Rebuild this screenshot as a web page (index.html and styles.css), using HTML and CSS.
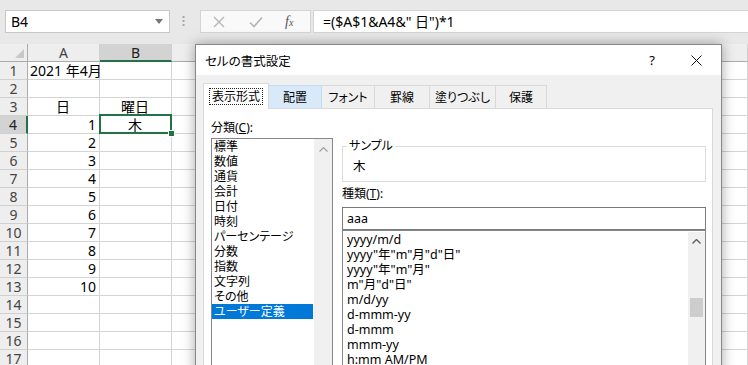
FILE: index.html
```html
<!DOCTYPE html>
<html lang="ja">
<head>
  <meta charset="UTF-8" />
  <title>セルの書式設定</title>
  <link rel="stylesheet" href="styles.css">
</head>
<body>
  <div class="app">
    <!-- 数式バー -->
    <div class="formula-bar">
      <div class="name-box">
        <span>B4</span>
        <svg class="caret" width="8" height="5" viewBox="0 0 8 5"><path d="M0 0h8L4 5z" fill="#777"/></svg>
      </div>
      <svg class="grip" width="3" height="12" viewBox="0 0 3 12">
        <rect x="0.5" y="1" width="2" height="2" fill="#a8a8a8"/>
        <rect x="0.5" y="5" width="2" height="2" fill="#a8a8a8"/>
        <rect x="0.5" y="9" width="2" height="2" fill="#a8a8a8"/>
      </svg>
      <div class="fx-buttons">
        <svg width="12" height="12" viewBox="0 0 12 12"><path d="M1 1l10 10M11 1L1 11" stroke="#b4b4b4" stroke-width="1.3" fill="none"/></svg>
        <svg width="14" height="12" viewBox="0 0 14 12"><path d="M1 6.5l4 4L13 1.5" stroke="#b4b4b4" stroke-width="1.6" fill="none"/></svg>
        <span class="fx">f<small>x</small></span>
      </div>
      <div class="formula-input">=($A$1&amp;A4&amp;" 日")*1</div>
    </div>

    <!-- シート -->
    <div class="sheet" id="sheet"></div>

    <!-- ダイアログ -->
    <div class="dialog">
      <div class="dialog-title">
        <span>セルの書式設定</span>
        <span class="title-help">?</span>
        <svg class="title-close" width="11" height="11" viewBox="0 0 11 11"><path d="M0.5 0.5l10 10M10.5 0.5l-10 10" stroke="#111" stroke-width="1" fill="none"/></svg>
      </div>

      <div class="dialog-body">
        <div class="tabs">
          <div class="tab active"><span class="focus">表示形式</span></div>
          <div class="tab hover">配置</div>
          <div class="tab">フォント</div>
          <div class="tab">罫線</div>
          <div class="tab">塗りつぶし</div>
          <div class="tab">保護</div>
        </div>

        <div class="panel">
          <div class="category">
            <div class="label">分類(<u>C</u>):</div>
            <div class="listbox">
              <ul class="items">
                <li>標準</li>
                <li>数値</li>
                <li>通貨</li>
                <li>会計</li>
                <li>日付</li>
                <li>時刻</li>
                <li>パーセンテージ</li>
                <li>分数</li>
                <li>指数</li>
                <li>文字列</li>
                <li>その他</li>
                <li class="selected">ユーザー定義</li>
              </ul>
              <div class="scrollbar">
                <svg class="arrow" width="9" height="5" viewBox="0 0 9 5"><path d="M0.5 4.5l4-4 4 4" stroke="#a0a0a0" stroke-width="1.2" fill="none"/></svg>
              </div>
            </div>
          </div>

          <div class="detail">
            <fieldset class="sample">
              <legend>サンプル</legend>
              <div class="sample-value">木</div>
            </fieldset>
            <div class="label">種類(<u>T</u>):</div>
            <div class="type-input">aaa</div>
            <div class="listbox wide">
              <ul class="items">
                <li>yyyy/m/d</li>
                <li>yyyy"年"m"月"d"日"</li>
                <li>yyyy"年"m"月"</li>
                <li>m"月"d"日"</li>
                <li>m/d/yy</li>
                <li>d-mmm-yy</li>
                <li>d-mmm</li>
                <li>mmm-yy</li>
                <li>h:mm AM/PM</li>
              </ul>
              <div class="scrollbar">
                <svg class="arrow" width="9" height="5" viewBox="0 0 9 5"><path d="M0.5 4.5l4-4 4 4" stroke="#606060" stroke-width="1.4" fill="none"/></svg>
                <div class="thumb"></div>
              </div>
            </div>
          </div>
        </div>
      </div>
    </div>
  </div>

  <script>
    const cols = ["A", "B", "C", "D", "E", "F", "G", "H", "I", "J"];
    const data = {
      "1A": ["2021 年4月", "left"],
      "3A": ["日", "center"],
      "3B": ["曜日", "center"],
      "4B": ["木", "center"]
    };
    for (let i = 4; i <= 13; i++) data[i + "A"] = [String(i - 3), "right"];

    const sheet = document.getElementById("sheet");

    function addCell(cls, text) {
      const div = document.createElement("div");
      div.className = cls;
      div.textContent = text || "";
      sheet.appendChild(div);
      return div;
    }

    addCell("hdr corner");
    cols.forEach(c => addCell("hdr col-hdr" + (c === "B" ? " sel" : ""), c));

    for (let r = 1; r <= 17; r++) {
      addCell("hdr row-hdr" + (r === 4 ? " sel" : ""), r);
      cols.forEach(c => {
        const d = data[r + c];
        const cell = addCell("cell" + (d ? " " + d[1] : ""), d ? d[0] : "");
        if (r === 4 && c === "B") cell.classList.add("active");
      });
    }
  </script>
</body>
</html>
```

FILE: styles.css
```css
body {
  margin: 0;
  font-family: "Noto Sans", "Noto Sans CJK JP", sans-serif;
  color: #000;
}
.app {
  position: relative;
  width: 748px;
  height: 365px;
  overflow: hidden;
  background: #fff;
}

/* 数式バー */
.formula-bar {
  height: 44px;
  box-sizing: border-box;
  padding-top: 10px;
  background: #e8e8e8;
  display: flex;
  align-items: flex-start;
}
.name-box {
  margin-left: 5px;
  width: 165px;
  height: 23px;
  box-sizing: border-box;
  border: 1px solid #c8c8c8;
  background: #fff;
  display: flex;
  align-items: center;
  justify-content: space-between;
  padding: 0 6px 0 5px;
  font-size: 14px;
}
.grip {
  margin: 5px 0 0 12px;
}
.fx-buttons {
  margin-left: 15px;
  width: 111px;
  height: 23px;
  box-sizing: border-box;
  border: 1px solid #d4d4d4;
  background: #f9f9f9;
  display: flex;
  align-items: center;
  padding-left: 12px;
  gap: 24px;
}
.fx {
  font-family: "Liberation Serif", serif;
  font-style: italic;
  font-size: 14px;
  color: #555;
  margin-left: -2px;
}
.fx small {
  font-size: 10px;
}
.formula-input {
  margin-left: 2px;
  flex: 1;
  height: 23px;
  box-sizing: border-box;
  border: 1px solid #d4d4d4;
  border-right: none;
  background: #fff;
  padding-left: 9px;
  font-size: 14px;
  line-height: 21px;
}

/* シート */
.sheet {
  display: grid;
  grid-template-columns: 28px repeat(10, 72px);
  grid-auto-rows: 18px;
  font-size: 14px;
  line-height: 17px;
}
.hdr {
  background: #eeeeee;
  color: #444;
  text-align: center;
  box-sizing: border-box;
  border-right: 1px solid #d0d0d0;
  border-bottom: 1px solid #d0d0d0;
}
.corner {
  position: relative;
  border-right-color: #ababab;
  border-bottom-color: #ababab;
}
.corner::after {
  content: "";
  position: absolute;
  right: 3px;
  bottom: 3px;
  border-left: 9px solid transparent;
  border-bottom: 9px solid #c8c8c8;
}
.col-hdr {
  border-bottom-color: #ababab;
}
.row-hdr {
  border-right-color: #ababab;
}
.col-hdr.sel {
  background: #d3d3d3;
  border-bottom: 2px solid #217346;
  color: #222;
}
.row-hdr.sel {
  background: #d3d3d3;
  border-right: 2px solid #217346;
  color: #222;
}
.cell {
  box-sizing: border-box;
  border-right: 1px solid #d4d4d4;
  border-bottom: 1px solid #d4d4d4;
  padding: 0 3px 0 2px;
  white-space: nowrap;
}
.cell.left { text-align: left; }
.cell.center { text-align: center; }
.cell.right { text-align: right; }
.cell.active {
  position: relative;
}
.cell.active::before {
  content: "";
  position: absolute;
  left: -1px;
  top: -2px;
  right: -1px;
  bottom: -1px;
  border: 2px solid #217346;
}
.cell.active::after {
  content: "";
  position: absolute;
  right: -4px;
  bottom: -4px;
  width: 5px;
  height: 5px;
  background: #217346;
  border: 1px solid #fff;
}

/* ダイアログ */
.dialog {
  position: absolute;
  left: 195px;
  top: 44px;
  width: 527px;
  height: 330px;
  box-sizing: border-box;
  border: 1px solid #888;
  background: #f0f0f0;
  box-shadow: 0 0 12px rgba(0,0,0,0.35);
  font-size: 12px;
  font-feature-settings: "palt";
}
.dialog-title {
  height: 30px;
  background: #fff;
  display: flex;
  align-items: center;
  padding-left: 9px;
  font-size: 12.5px;
}
.title-help {
  margin-left: auto;
  font-size: 13px;
}
.title-close {
  margin: 0 19px 0 36px;
}
.dialog-body {
  padding: 7px 8px 0 7px;
}
.tabs {
  display: grid;
  grid-template-columns: 66px 53px 53px 55px 66px 51px;
  align-items: end;
  height: 26px;
}
.tab {
  height: 23px;
  box-sizing: border-box;
  border: 1px solid #d9d9d9;
  border-bottom: none;
  border-left: none;
  background: #f0f0f0;
  display: flex;
  align-items: center;
  justify-content: center;
}
.tab.hover {
  background: #d8eaf9;
  border-color: #c2dcf2;
}
.tab.active {
  position: relative;
  height: 26px;
  margin-bottom: -1px;
  background: #fff;
  border-left: 1px solid #d9d9d9;
  z-index: 1;
}
.focus {
  border: 1px dotted #222;
  padding: 0 2px;
  line-height: 15px;
}
.panel {
  height: 260px;
  box-sizing: border-box;
  border: 1px solid #d9d9d9;
  background: #fff;
  padding: 10px 6px 0 7px;
  display: grid;
  grid-template-columns: 122px 364px;
  column-gap: 9px;
  align-items: start;
}
.label {
  line-height: 18px;
}
.listbox {
  display: flex;
  height: 240px;
  margin-top: 1px;
  box-sizing: border-box;
  border: 1px solid #828790;
  background: #fff;
}
.items {
  flex: 1;
  list-style: none;
  margin: 0;
  padding: 0;
  line-height: 15px;
  white-space: nowrap;
}
.items li {
  padding-left: 2px;
}
.items li.selected {
  background: #0078d7;
  color: #fff;
  margin-right: 1px;
}
.scrollbar {
  width: 18px;
  background: #f0f0f0;
  display: flex;
  flex-direction: column;
  align-items: center;
}
.arrow {
  margin-top: 8px;
}
.sample {
  margin: 19px 0 0;
  height: 44px;
  box-sizing: border-box;
  border: 1px solid #dcdcdc;
  padding: 0 4px;
}
.sample legend {
  padding: 0 2px;
  line-height: 16px;
}
.sample-value {
  padding: 5px 0 0 6px;
  line-height: 16px;
  font-size: 12.5px;
}
.detail .label {
  margin-top: 3px;
}
.type-input {
  margin-top: 4px;
  height: 23px;
  box-sizing: border-box;
  border: 1px solid #7a7a7a;
  padding-left: 4px;
  line-height: 21px;
  font-size: 12.5px;
}
.listbox.wide {
  margin-top: 0;
  padding-top: 1px;
}
.listbox.wide .items {
  font-size: 12.5px;
}
.listbox.wide .items li {
  padding-left: 4px;
}
.listbox.wide .scrollbar {
  width: 17px;
}
.listbox.wide .arrow {
  margin-top: 7px;
}
.thumb {
  margin-top: 54px;
  width: 13px;
  height: 19px;
  background: #cdcdcd;
}
```
